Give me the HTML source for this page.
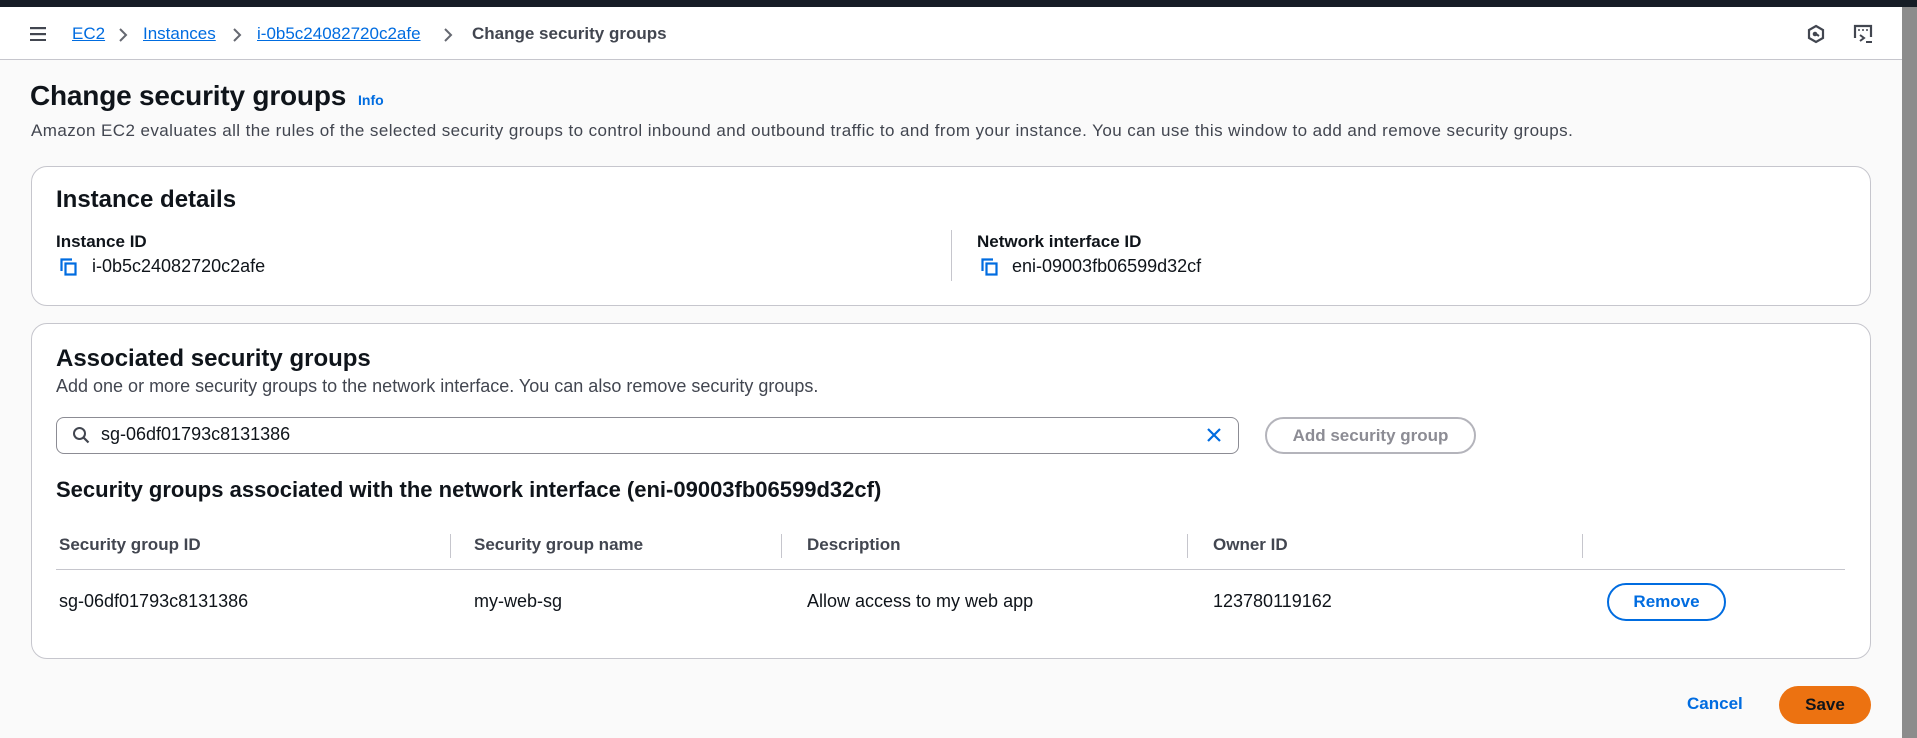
<!DOCTYPE html>
<html><head><meta charset="utf-8"><style>
*{box-sizing:border-box;margin:0;padding:0}
body{width:1917px;height:738px;overflow:hidden;background:#fafafa;font-family:"Liberation Sans",sans-serif;color:#0f141a;position:relative;font-size:17px}
.a{position:absolute;white-space:nowrap}
.top{position:absolute;left:0;top:0;width:1917px;height:7px;background:#161d26}
.hdr{position:absolute;left:0;top:7px;width:1902px;height:53px;background:#fff;border-bottom:1px solid #c6c6cd}
.sb{position:absolute;right:0;top:7px;width:15px;height:731px;background:#8c8c8c}
.lnk{color:#006ce0;text-decoration:underline}
.card{position:absolute;left:31px;width:1840px;border:1px solid #c6c6cd;border-radius:16px;background:#fff}
.lbl{font-weight:bold;font-size:17px}
.th{font-weight:bold;font-size:17px;color:#424650}
.v{font-size:18px}
.dv{position:absolute;width:1px;background:#c6c6cd}
.btn{position:absolute;border-radius:20px;font-weight:bold;font-size:17px;display:flex;align-items:center;justify-content:center}
</style></head><body>
<div class="top"></div>
<div class="hdr"></div>
<div class="sb"></div>
<svg class="a" style="left:30px;top:27px" width="16" height="14"><rect y="0" width="16" height="2.2" fill="#424650"/><rect y="6" width="16" height="2.2" fill="#424650"/><rect y="12" width="16" height="2.2" fill="#424650"/></svg>
<div class="a" style="left:72px;top:24px;font-size:17px"><span class="lnk">EC2</span></div>
<svg class="a" style="left:118px;top:28px" width="10" height="14"><path d="M2 1l6 6-6 6" stroke="#656871" stroke-width="2" fill="none"/></svg>
<div class="a" style="left:143px;top:24px;font-size:17px"><span class="lnk">Instances</span></div>
<svg class="a" style="left:232px;top:28px" width="10" height="14"><path d="M2 1l6 6-6 6" stroke="#656871" stroke-width="2" fill="none"/></svg>
<div class="a" style="left:257px;top:24px;font-size:17px"><span class="lnk">i-0b5c24082720c2afe</span></div>
<svg class="a" style="left:443px;top:28px" width="10" height="14"><path d="M2 1l6 6-6 6" stroke="#656871" stroke-width="2" fill="none"/></svg>
<div class="a" style="left:472px;top:24px;font-size:17px;font-weight:bold;color:#424650">Change security groups</div>
<svg class="a" style="left:1806px;top:24px" width="20" height="20" viewBox="0 0 20 20"><path d="M10 2l7 4v8l-7 4-7-4V6z" stroke="#424650" stroke-width="2.2" fill="none"/><circle cx="9" cy="10" r="2.3" fill="#424650"/><path d="M10 10l3 2" stroke="#424650" stroke-width="2"/></svg>
<svg class="a" style="left:1852px;top:23px" width="22" height="22" viewBox="0 0 22 22"><path d="M3 15V3h16v11" stroke="#424650" stroke-width="2.2" fill="none"/><path d="M6 7h2M10 7h2M14 7h2" stroke="#424650" stroke-width="1.6"/><path d="M8 12l4 3-4 3" stroke="#424650" stroke-width="2" fill="none"/><path d="M14 19h6" stroke="#424650" stroke-width="2"/></svg>

<div class="a" style="left:30px;top:80px;font-size:28px;font-weight:bold;letter-spacing:-0.2px">Change security groups</div>
<div class="a" style="left:358px;top:92px;font-size:14px;font-weight:bold;color:#006ce0">Info</div>
<div class="a" style="left:31px;top:121px;font-size:17px;color:#424650;letter-spacing:0.42px">Amazon EC2 evaluates all the rules of the selected security groups to control inbound and outbound traffic to and from your instance. You can use this window to add and remove security groups.</div>

<div class="card" style="top:166px;height:140px"></div>
<div class="a" style="left:56px;top:186px;font-size:24px;font-weight:bold">Instance details</div>
<div class="a lbl" style="left:56px;top:232px">Instance ID</div>
<svg class="a" style="left:60px;top:258px" width="18" height="18"><path d="M1.5 13V1.5H12" stroke="#006ce0" stroke-width="2.2" fill="none"/><rect x="5.5" y="5.5" width="10" height="11" stroke="#006ce0" stroke-width="2.2" fill="none"/></svg>
<div class="a v" style="left:92px;top:256px">i-0b5c24082720c2afe</div>
<div class="dv" style="left:951px;top:230px;height:51px"></div>
<div class="a lbl" style="left:977px;top:232px">Network interface ID</div>
<svg class="a" style="left:981px;top:258px" width="18" height="18"><path d="M1.5 13V1.5H12" stroke="#006ce0" stroke-width="2.2" fill="none"/><rect x="5.5" y="5.5" width="10" height="11" stroke="#006ce0" stroke-width="2.2" fill="none"/></svg>
<div class="a v" style="left:1012px;top:256px">eni-09003fb06599d32cf</div>

<div class="card" style="top:323px;height:336px"></div>
<div class="a" style="left:56px;top:345px;font-size:24px;font-weight:bold">Associated security groups</div>
<div class="a" style="left:56px;top:376px;font-size:18px;color:#424650">Add one or more security groups to the network interface. You can also remove security groups.</div>
<div class="a" style="left:56px;top:417px;width:1183px;height:37px;border:1px solid #8c8c94;border-radius:8px;background:#fff"></div>
<svg class="a" style="left:72px;top:426px" width="18" height="18"><circle cx="7.5" cy="7.5" r="5.5" stroke="#424650" stroke-width="2" fill="none"/><path d="M11.5 11.5l5 5" stroke="#424650" stroke-width="2.2"/></svg>
<div class="a v" style="left:101px;top:424px">sg-06df01793c8131386</div>
<svg class="a" style="left:1206px;top:427px" width="16" height="16"><path d="M2 2l12 12M14 2L2 14" stroke="#006ce0" stroke-width="2.2"/></svg>
<div class="btn" style="left:1265px;top:417px;width:211px;height:37px;border:2px solid #b4b4bb;color:#8c8c94">Add security group</div>

<div class="a" style="left:56px;top:477px;font-size:22px;font-weight:bold">Security groups associated with the network interface (eni-09003fb06599d32cf)</div>
<div class="a th" style="left:59px;top:535px">Security group ID</div>
<div class="a th" style="left:474px;top:535px">Security group name</div>
<div class="a th" style="left:807px;top:535px">Description</div>
<div class="a th" style="left:1213px;top:535px">Owner ID</div>
<div class="dv" style="left:450px;top:534px;height:24px"></div>
<div class="dv" style="left:781px;top:534px;height:24px"></div>
<div class="dv" style="left:1187px;top:534px;height:24px"></div>
<div class="dv" style="left:1582px;top:534px;height:24px"></div>
<div class="a" style="left:56px;top:569px;width:1789px;height:1px;background:#c6c6cd"></div>
<div class="a v" style="left:59px;top:591px">sg-06df01793c8131386</div>
<div class="a v" style="left:474px;top:591px">my-web-sg</div>
<div class="a v" style="left:807px;top:591px">Allow access to my web app</div>
<div class="a v" style="left:1213px;top:591px">123780119162</div>
<div class="btn" style="left:1607px;top:583px;width:119px;height:38px;border:2px solid #006ce0;color:#006ce0">Remove</div>

<div class="a" style="left:1687px;top:694px;font-size:17px;font-weight:bold;color:#006ce0">Cancel</div>
<div class="btn" style="left:1779px;top:686px;width:92px;height:38px;background:#ec7211;color:#0f141a">Save</div>
</body></html>
